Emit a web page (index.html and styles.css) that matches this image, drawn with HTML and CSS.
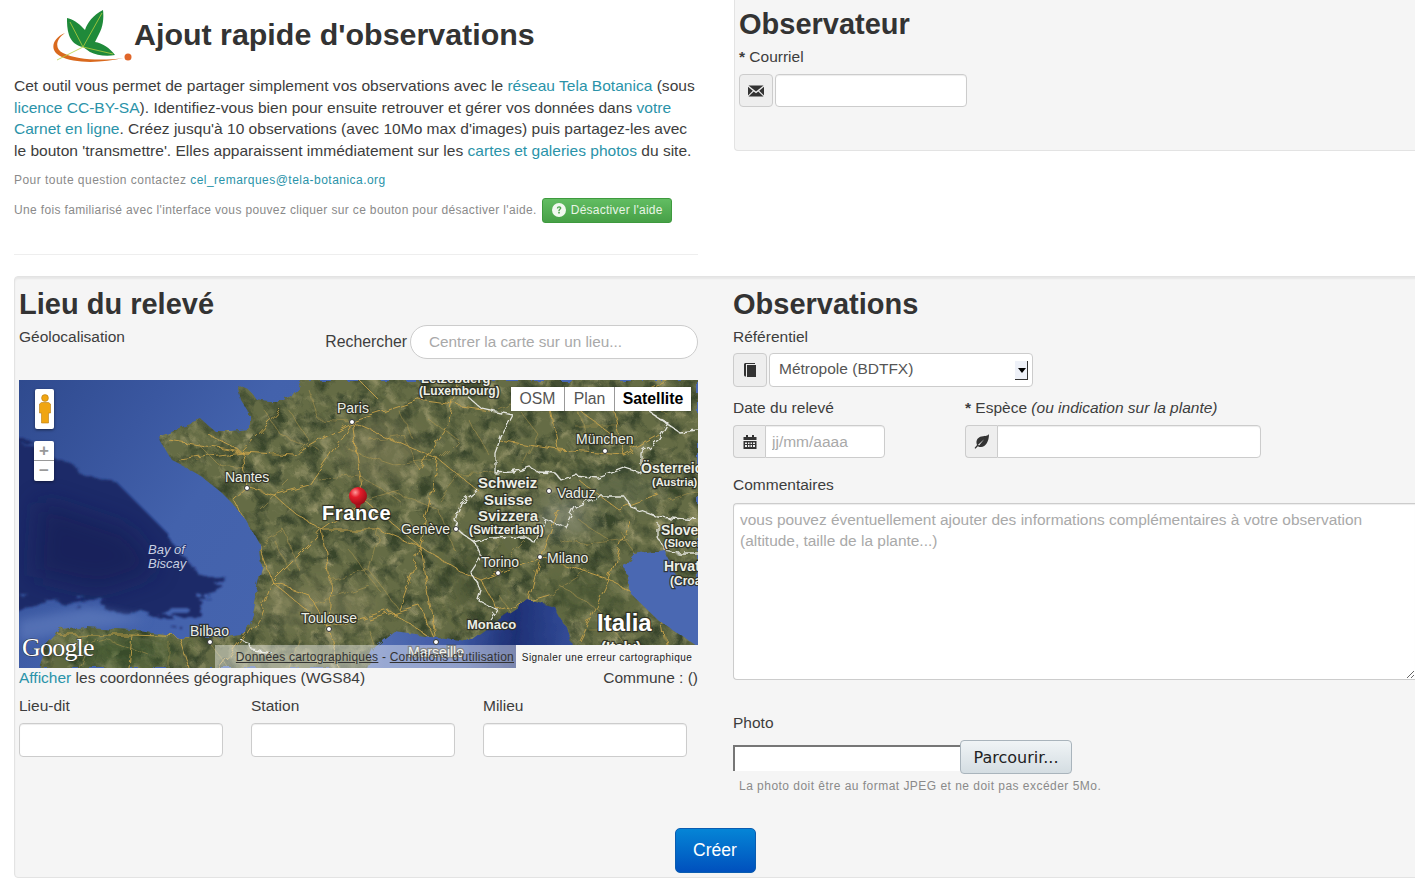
FILE: index.html
```html
<!DOCTYPE html>
<html lang="fr">
<head>
<meta charset="utf-8">
<title>Ajout rapide d'observations</title>
<link rel="stylesheet" href="styles.css">
</head>
<body>
<div class="page">
  <div class="top-row">
    <section class="intro">
      <header class="intro-head">
        <svg class="logo" viewBox="0 0 82 54" width="82" height="54" aria-hidden="true">
          <path d="M13 23C-1 29 -2 41 8 46C22 54 50 53 72 48C50 51 24 50 11 43C3 39 3 30 13 23Z" fill="#d9691e"/>
          <circle cx="76" cy="47" r="3.500" fill="#e0662a"/>
          <path d="M31 37C24 36 19 31 17 25C15 19 15 13 15 8C20 9 27 13 31 18L33 20C35 13 41 5 51 0C52 8 51 17 47 24L43 32C50 33 58 38 63 45C54 47 44 45 38 42Z" fill="#1f8a3a"/>
          <path d="M5 50L31 37L50 3M31 37L18 12M31 37L61 44" fill="none" stroke="#b6cf3e" stroke-width="0.800"/>
        </svg>
        <h1>Ajout rapide d'observations</h1>
      </header>
      <p class="lead">Cet outil vous permet de partager simplement vos observations avec le <a href="#">réseau Tela Botanica</a> (sous <a href="#">licence CC-BY-SA</a>). Identifiez-vous bien pour ensuite retrouver et gérer vos données dans <a href="#">votre Carnet en ligne</a>. Créez jusqu'à 10 observations (avec 10Mo max d'images) puis partagez-les avec le bouton 'transmettre'. Elles apparaissent immédiatement sur les <a href="#">cartes et galeries photos</a> du site.</p>
      <p class="note note-contact">Pour toute question contactez <a href="#">cel_remarques@tela-botanica.org</a></p>
      <p class="note note-help">Une fois familiarisé avec l'interface vous pouvez cliquer sur ce bouton pour désactiver l'aide.
        <button class="btn-help" type="button">
          <svg viewBox="0 0 14 14" width="14" height="14" aria-hidden="true"><circle cx="7" cy="7" r="7" fill="#f2f8f0"/><path d="M4.800 5.400C4.900 3.900 5.900 3.200 7.100 3.200C8.500 3.200 9.400 4 9.400 5.100C9.400 6.500 7.700 6.600 7.700 8.100H6.300C6.300 6.100 7.800 6 7.800 5.200C7.800 4.800 7.500 4.500 7 4.500C6.500 4.500 6.200 4.900 6.200 5.400ZM6.200 8.800H7.800V10.400H6.200Z" fill="#4ea64e"/></svg>
          Désactiver l'aide
        </button>
      </p>
      <hr class="rule">
    </section>
    <section class="observer">
      <h2>Observateur</h2>
      <label class="field-label"><b class="req">*</b> Courriel</label>
      <div class="input-group email-group">
        <span class="addon addon-wide">
          <svg viewBox="0 0 16 12" width="16" height="12" aria-hidden="true"><path d="M0.500 0.500H15.500L8 6.500ZM0 1.800L4.800 5.800L0 10.400ZM16 1.800V10.400L11.200 5.800ZM5.700 6.500L8 8.300L10.300 6.500L15.500 11.500H0.500Z" fill="#333"/></svg>
        </span>
        <input class="text-input" type="text">
      </div>
    </section>
  </div>

  <main class="panel">
    <section class="col-place">
      <h2>Lieu du relevé</h2>
      <div class="geo-row">
        <span class="field-label">Géolocalisation</span>
        <div class="search">
          <label class="search-label">Rechercher</label>
          <input class="search-input" type="text" placeholder="Centrer la carte sur un lieu...">
        </div>
      </div>
      <div class="map">
        <svg class="map-art" viewBox="0 0 679 288" width="679" height="288" aria-hidden="true">
          <defs>
            <linearGradient id="sea" x1="0" y1="0" x2="1" y2="0.300">
              <stop offset="0" stop-color="#2f4a8e"/><stop offset="0.200" stop-color="#3a57a0"/><stop offset="0.350" stop-color="#4362ac"/><stop offset="1" stop-color="#4a68b2"/>
            </linearGradient>
            <linearGradient id="med" x1="0" y1="0" x2="1" y2="0">
              <stop offset="0" stop-color="#5671b6"/><stop offset="0.450" stop-color="#3d58a3"/><stop offset="0.700" stop-color="#1d2f74"/><stop offset="1" stop-color="#36509c"/>
            </linearGradient>
            <filter id="blur5" x="-50%" y="-50%" width="200%" height="200%"><feGaussianBlur stdDeviation="5"/></filter>
            <filter id="blur12" x="-80%" y="-80%" width="260%" height="260%"><feGaussianBlur stdDeviation="12"/></filter>
            <filter id="rough" x="-15%" y="-15%" width="130%" height="130%">
              <feTurbulence type="fractalNoise" baseFrequency="0.035 0.090" numOctaves="4" seed="4" result="n"/>
              <feDisplacementMap in="SourceGraphic" in2="n" scale="42"/>
              <feGaussianBlur stdDeviation="1.300"/>
            </filter>
            <filter id="terrain" x="0" y="0" width="100%" height="100%" color-interpolation-filters="sRGB">
              <feTurbulence type="fractalNoise" baseFrequency="0.060" numOctaves="5" seed="9" result="noise"/>
              <feColorMatrix in="noise" type="matrix" values="0 0 0 0 0.220 0 0 0 0 0.270 0 0 0 0 0.170 3 0 0 0 -1.300" result="dark"/>
              <feColorMatrix in="noise" type="matrix" values="0 0 0 0 0.600 0 0 0 0 0.590 0 0 0 0 0.420 0 3 0 0 -1.450" result="pale"/>
              <feMerge><feMergeNode in="SourceGraphic"/><feMergeNode in="pale"/><feMergeNode in="dark"/></feMerge>
            </filter>
            <filter id="wiggle" x="-3%" y="-3%" width="106%" height="106%">
              <feTurbulence type="fractalNoise" baseFrequency="0.070" numOctaves="3" seed="12" result="n"/>
              <feDisplacementMap in="SourceGraphic" in2="n" scale="9"/>
            </filter>
            <filter id="jag" x="-3%" y="-3%" width="106%" height="106%">
              <feTurbulence type="fractalNoise" baseFrequency="0.140" numOctaves="2" seed="3" result="n"/>
              <feDisplacementMap in="SourceGraphic" in2="n" scale="7"/>
            </filter>
            <clipPath id="landclip"><path d="M283 0L273 13L267 22L250 22L238 20L230 10L218 5L222 20L230 33L230 50L213 52L197 52L183 40L160 48L140 55L143 63L153 80L173 90L187 100L203 113L213 123L227 140L240 163L243 187L238 207L233 233L227 253L200 257L160 257L113 250L67 247L43 250L27 267L20 288L679 288L679 267L639 240L611 213L606 187L616 175L646 170L659 197L679 207L679 0Z"/></clipPath>
            <radialGradient id="pin" cx="0.350" cy="0.300" r="0.800">
              <stop offset="0" stop-color="#ff9a9a"/><stop offset="0.350" stop-color="#e51d2a"/><stop offset="1" stop-color="#8e0b14"/>
            </radialGradient>
          </defs>
          <rect width="679" height="288" fill="url(#sea)"/>
          <path d="M-20 55L40 75L60 90L100 105L130 135L150 155L175 190L210 200L180 215L180 235L130 235L80 225L25 220L-20 235Z" fill="#1a2a68" filter="url(#rough)"/>
          <path d="M20 120L110 150L140 190L80 210L15 195Z" fill="#121d52" opacity="0.600" filter="url(#blur12)"/>
          <path d="M0 240L70 228L130 240L60 250L0 262Z" fill="#5d79bb" opacity="0.700" filter="url(#blur5)"/>
          <g filter="url(#wiggle)">
            <g clip-path="url(#landclip)">
              <rect width="679" height="288" fill="#656c45" filter="url(#terrain)"/>
              <ellipse cx="300" cy="225" rx="60" ry="22" fill="#8d8a62" opacity="0.550" filter="url(#blur12)"/>
              <ellipse cx="360" cy="70" rx="40" ry="34" fill="#807d5a" opacity="0.450" filter="url(#blur12)"/>
              <ellipse cx="545" cy="135" rx="26" ry="16" fill="#a5a79c" opacity="0.600" filter="url(#blur12)"/>
              <ellipse cx="600" cy="110" rx="45" ry="12" fill="#5d6a50" opacity="0.600" filter="url(#blur12)"/>
              <ellipse cx="455" cy="200" rx="18" ry="36" fill="#3c4a2c" opacity="0.600" filter="url(#blur12)"/>
              <ellipse cx="100" cy="272" rx="60" ry="13" fill="#39552c" opacity="0.700" filter="url(#blur12)"/>
              <ellipse cx="570" cy="215" rx="45" ry="20" fill="#4d5a36" opacity="0.600" filter="url(#blur12)"/>
              <path d="M223 72L150 60M223 72L160 80M223 72L190 55M223 72L262 30M223 72L228 108M223 72L275 75L333 42M228 108L255 115L290 105L333 42M228 108L215 120L240 165L253 202M255 115L278 135L303 150L345 120M253 202L240 240L230 255M253 202L310 248L370 230L417 262M253 202L290 165L303 150L312 200L310 248M303 150L360 150L402 167L380 230M402 167L417 262M402 167L345 120L333 42M402 167L440 190L462 200L521 177L590 200L640 225M333 42L400 20L470 30M333 42L420 80L459 110M420 80L400 167M480 60L540 70L605 75L640 55M540 70L530 20M605 75L590 10M521 177L510 220M521 177L540 130M462 200L479 230L530 215M590 200L560 260M590 200L610 140M40 255L113 255L170 257M113 255L110 288M160 257L170 288M227 253L200 288M310 248L320 288M417 262L400 225L350 240M310 248L290 215L253 202M640 225L650 288M560 100L600 130L640 115M600 60L560 30L610 20L650 0M440 0L430 45L400 90M360 20L340 0" fill="none" stroke="#d4a94c" stroke-width="0.900" opacity="0.900"/>
              <path d="M270 30L290 60L275 75M290 10L300 40L333 42M350 60L385 55L400 90M300 100L340 95L380 120M345 120L380 110M360 150L350 190L380 230M310 200L350 190M265 150L280 190M240 165L265 150M420 120L440 95L476 93M410 40L440 60L420 80M500 30L520 55L505 85M560 30L570 70M620 20L650 35M480 215L500 245M540 205L580 230L610 270M530 215L570 190M600 150L620 180M560 140L590 160M60 268L90 260L130 275M150 262L150 288M570 250L600 250M330 70L375 85L420 80M245 30L262 55L300 70M180 65L200 85L228 90M240 130L270 100M330 170L360 210M270 190L255 160M290 225L350 205M370 110L420 130L435 170M380 30L395 60M450 40L470 75M500 100L470 105M540 160L570 165L610 160M490 175L520 145M620 200L650 190M640 100L670 85M650 120L679 110M555 45L600 45M70 262L60 288M190 262L210 288M280 260L270 288M350 250L355 265M480 30L510 15" fill="none" stroke="#bfa052" stroke-width="0.600" opacity="0.750"/>
            </g>
            <path d="M356 267L376 252L412 257L449 262L479 240L509 220L536 227L552 257L560 292L345 292Z" fill="url(#med)"/>
          </g>
          <path d="M449 17L462 28L494 35L482 57L476 73L476 93L493 92L502 90L511 87L520 92L536 93L542 100L556 95L579 98L606 88L622 93L622 73L639 60L649 43L632 33L660 52L679 50M459 110L442 123L436 140L439 150L456 163L472 158L506 157L516 163L526 140L546 147L556 127L579 117L606 117L612 127L639 137L679 140M456 163L462 177L452 192L462 210L459 220L479 230L472 240M639 143L639 157L646 170L659 173L679 173M222 260L230 263L233 270L253 273" fill="none" stroke="#e2e3dc" stroke-width="1.300" filter="url(#jag)"/>
          <path d="M336 123L339 136L342 123Z" fill="#a8141c"/>
          <circle cx="339" cy="116" r="9" fill="url(#pin)"/>
          <g class="dots">
            <circle cx="333" cy="42" r="2.500"/><circle cx="228" cy="108" r="2.500"/><circle cx="586" cy="71" r="2.500"/><circle cx="437" cy="149" r="2.500"/><circle cx="530" cy="111" r="2.500"/><circle cx="521" cy="177" r="2.500"/><circle cx="479" cy="193" r="2.500"/><circle cx="417" cy="262" r="2.500"/><circle cx="310" cy="249" r="2.500"/><circle cx="191" cy="262" r="2.500"/>
          </g>
          <g class="lbl">
            <text x="402" y="3" class="b13">Lëtzebuerg</text>
            <text x="400" y="15" class="b12">(Luxembourg)</text>
            <text x="318" y="33">Paris</text>
            <text x="557" y="64">München</text>
            <text x="622" y="93" class="b14">Österreich</text>
            <text x="633" y="106" class="b11">(Austria)</text>
            <text x="206" y="102">Nantes</text>
            <text x="382" y="154">Genève</text>
            <text x="459" y="108" class="b15">Schweiz</text>
            <text x="465" y="125" class="b15">Suisse</text>
            <text x="459" y="141" class="b15">Svizzera</text>
            <text x="450" y="154" class="b12">(Switzerland)</text>
            <text x="538" y="118">Vaduz</text>
            <text x="528" y="183">Milano</text>
            <text x="462" y="187">Torino</text>
            <text x="642" y="155" class="b14">Slovenija</text>
            <text x="645" y="167" class="b11">(Slovenia)</text>
            <text x="645" y="191" class="b14">Hrvatska</text>
            <text x="651" y="205" class="b12">(Croatia)</text>
            <text x="448" y="249" class="b13">Monaco</text>
            <text x="578" y="251" class="b22">Italia</text>
            <text x="582" y="272" class="b15">(Italy)</text>
            <text x="389" y="277">Marseille</text>
            <text x="282" y="243">Toulouse</text>
            <text x="171" y="256">Bilbao</text>
            <text x="129" y="174" class="ital">Bay of</text>
            <text x="129" y="188" class="ital">Biscay</text>
            <text x="303" y="140" class="b20">France</text>
            <text x="3" y="276" class="google">Google</text>
          </g>
        </svg>
        <div class="pegman">
          <svg viewBox="0 0 12 30" width="12" height="30" aria-hidden="true"><circle cx="6" cy="4" r="3.400" fill="#f0a512" stroke="#b87a10" stroke-width="0.600"/><path d="M2.500 8.500H9.500L11.500 10V19H9.500V29H2.500V19H0.500V10Z" fill="#f0a512" stroke="#b87a10" stroke-width="0.600"/></svg>
        </div>
        <div class="zoom-ctl"><span class="zoom-btn zoom-plus">+</span><span class="zoom-btn">−</span></div>
        <div class="map-types"><span class="map-type type-osm">OSM</span><span class="map-type type-plan">Plan</span><span class="map-type map-type-on">Satellite</span></div>
        <div class="attribution"><a href="#">Données cartographiques</a> - <a href="#">Conditions d'utilisation</a></div>
        <div class="map-report">Signaler une erreur cartographique</div>
      </div>
      <div class="coords-row">
        <span><a href="#">Afficher</a> les coordonnées géographiques (WGS84)</span>
        <span>Commune : ()</span>
      </div>
      <div class="place-fields">
        <div class="place-field"><label class="field-label">Lieu-dit</label><input class="text-input" type="text"></div>
        <div class="place-field"><label class="field-label">Station</label><input class="text-input" type="text"></div>
        <div class="place-field"><label class="field-label">Milieu</label><input class="text-input" type="text"></div>
      </div>
    </section>

    <section class="col-obs">
      <h2>Observations</h2>
      <label class="field-label">Référentiel</label>
      <div class="input-group ref-group">
        <span class="addon addon-wide">
          <svg viewBox="0 0 12 14" width="12" height="14" aria-hidden="true"><path d="M0 1.500C0 0.700 0.700 0 1.500 0H11V1H2V13.500H1.500C0.700 13.500 0 12.800 0 12ZM3 2H12V14H3Z" fill="#333"/></svg>
        </span>
        <div class="select-box">
          <select class="select"><option>Métropole (BDTFX)</option></select>
          <span class="select-arrow"></span>
        </div>
      </div>
      <div class="obs-pair">
        <div class="date-field">
          <label class="field-label">Date du relevé</label>
          <div class="input-group joined date-group">
            <span class="addon">
              <svg viewBox="0 0 14 14" width="14" height="14" aria-hidden="true"><path d="M3 0H5V2H9V0H11V2H13.500V5H0.500V2H3ZM0.500 6H13.500V14H0.500ZM2 7.500V9H4V7.500ZM5 7.500V9H6.500V7.500ZM7.500 7.500V9H9V7.500ZM10 7.500V9H12V7.500ZM2 10V12H4V10ZM5 10V12H6.500V10ZM7.500 10V12H9V10ZM10 10V12H12V10Z" fill="#333"/></svg>
            </span>
            <input class="text-input" type="text" placeholder="jj/mm/aaaa">
          </div>
        </div>
        <div class="species-field">
          <label class="field-label"><b class="req">*</b> Espèce <em>(ou indication sur la plante)</em></label>
          <div class="input-group joined species-group">
            <span class="addon">
              <svg viewBox="0 0 14 14" width="15" height="15" aria-hidden="true"><path d="M14 0C13 1.500 12 1.800 8.500 2C4.500 2.300 2.200 4.500 2.300 8C2.300 8.800 2.500 9.500 2.800 10.200L0.500 13L1.300 13.800L3.600 11.400C4.500 12 5.500 12.200 6.500 12.200C11 12 14 7 14 0ZM3.800 10L9.500 5L4.700 10.800Z" fill="#333"/></svg>
            </span>
            <input class="text-input" type="text">
          </div>
        </div>
      </div>
      <label class="field-label comment-label">Commentaires</label>
      <textarea class="comment" placeholder="vous pouvez éventuellement ajouter des informations complémentaires à votre observation (altitude, taille de la plante...)"></textarea>
      <label class="field-label photo-label">Photo</label>
      <div class="file-row">
        <span class="file-name"></span>
        <button class="file-btn" type="button">Parcourir...</button>
      </div>
      <p class="note file-note">La photo doit être au format JPEG et ne doit pas excéder 5Mo.</p>
    </section>
    <div class="submit-row"><button class="btn-create" type="button">Créer</button></div>
  </main>
</div>
</body>
</html>
```
FILE: styles.css
```css
* { box-sizing: border-box; }
html, body { margin: 0; padding: 0; height: 879px; overflow: hidden; background: #fff; }
body { font-family: "Liberation Sans", Arial, sans-serif; font-size: 15.5px; line-height: 20px; color: #3d3d3d; }
a { color: #2a93a9; text-decoration: none; }
.page { padding-left: 14px; width: 1415px; }

.top-row { display: flex; height: 276px; }
.intro { width: 684px; flex: none; }
.intro-head { display: flex; align-items: flex-start; padding: 10px 0 0 38px; height: 75px; }
.logo { flex: none; }
.intro-head h1 { margin: 6px 0 0 0; font-size: 30.4px; line-height: 36px; font-weight: bold; color: #333; }
.lead { margin: 0; font-size: 15.55px; line-height: 21.7px; }
.note { font-size: 12px; line-height: 16px; color: #8a8a8a; letter-spacing: 0.47px; margin: 0; }
.note-contact { margin-top: 10px; }
.note-help { margin-top: 10px; display: flex; align-items: center; white-space: nowrap; gap: 5px; letter-spacing: 0.35px; }
.btn-help { display: inline-flex; align-items: center; gap: 5px; width: 130px; height: 25px; padding: 0 0 0 9px; border: 1px solid #3e9a3e; border-radius: 3px; background: linear-gradient(#62bd62, #47a047); color: #e9f5e6; font: 12px "Liberation Sans", Arial, sans-serif; letter-spacing: 0.25px; white-space: nowrap; }
.rule { margin: 31px 0 0; border: 0; border-top: 1px solid #eee; }

.observer { flex: 1; margin: 0 0 125px 36px; background: #f5f5f5; border-left: 1px solid #e3e3e3; border-bottom: 1px solid #e3e3e3; border-bottom-left-radius: 4px; padding: 7px 0 0 4px; }
h2 { margin: 0; font-size: 29px; line-height: 34px; font-weight: bold; color: #333; }
.field-label { display: block; font-size: 15.5px; line-height: 20px; }
.req { font-weight: bold; }
.observer .field-label { margin-top: 6px; }

.input-group { display: flex; }
.addon { display: flex; align-items: center; justify-content: center; flex: none; width: 32px; background: #eee; border: 1px solid #ccc; border-radius: 4px 0 0 4px; }
.addon-wide { width: 34px; border-radius: 4px; margin-right: 2px; }
.text-input { display: block; height: 33px; padding: 4px 6px; background: #fff; border: 1px solid #ccc; border-radius: 4px; box-shadow: inset 0 1px 1px rgba(0,0,0,.075); font: 15.5px "Liberation Sans", Arial, sans-serif; color: #555; min-width: 0; }
.text-input::placeholder, .search-input::placeholder, .comment::placeholder { color: #a9a9a9; opacity: 1; }
.email-group { margin-top: 7px; height: 33px; }
.email-group .text-input { width: 192px; }
.joined .addon { border-right: 0; }
.joined .text-input { border-radius: 0 4px 4px 0; flex: 1; }

.panel { position: relative; width: 1406px; height: 602px; background: #f5f5f5; border: 1px solid #e3e3e3; border-radius: 4px; box-shadow: inset 0 2px 2px rgba(0,0,0,.06); padding: 10px 0 0 4px; display: grid; grid-template-columns: 679px 682px; column-gap: 35px; align-content: start; }
.geo-row { display: flex; justify-content: space-between; align-items: flex-start; height: 49px; position: relative; }
.geo-row > .field-label { margin-top: 6px; }
.search { display: flex; align-items: center; gap: 3px; margin-top: 4px; }
.search-label { font-size: 15.8px; }
.search-input { width: 288px; height: 34px; border: 1px solid #ccc; border-radius: 17px; padding: 0 18px; background: #fff; font: 15.3px "Liberation Sans", Arial, sans-serif; }

.map { position: relative; width: 679px; height: 288px; overflow: hidden; margin-top: 10px; background: #3e5ba6; }
.map-art { display: block; }
.dots circle { fill: #fff; stroke: #333; stroke-width: 1; }
.lbl text { font: 14px "Liberation Sans", Arial, sans-serif; fill: #eceee6; stroke: #2a2c22; stroke-width: 2.400px; stroke-opacity: .85; paint-order: stroke; }
.lbl .b11 { font-size: 11px; font-weight: bold; }
.lbl .b12 { font-size: 12px; font-weight: bold; }
.lbl .b13 { font-size: 13px; font-weight: bold; }
.lbl .b14 { font-size: 14px; font-weight: bold; }
.lbl .b15 { font-size: 15px; font-weight: bold; }
.lbl .b20 { font-size: 20px; font-weight: bold; fill: #fff; letter-spacing: 0.6px; }
.lbl .b22 { font-size: 24px; font-weight: bold; fill: #fff; }
.lbl .ital { font-size: 13px; font-style: italic; fill: #c8cfe4; stroke: #1c2a60; stroke-width: 1.500px; }
.lbl .google { font: 26px "Liberation Serif", serif; fill: #fff; stroke: #333; stroke-width: 1.200px; letter-spacing: -0.8px; }
.pegman { position: absolute; left: 16px; top: 9px; width: 19px; height: 40px; background: #fff; border-radius: 2px; box-shadow: 0 1px 3px rgba(0,0,0,.5); display: flex; align-items: center; justify-content: center; }
.zoom-ctl { position: absolute; left: 15px; top: 61px; width: 20px; height: 40px; background: #fff; border-radius: 2px; box-shadow: 0 1px 3px rgba(0,0,0,.4); display: flex; flex-direction: column; }
.zoom-btn { height: 20px; text-align: center; font: bold 17px/19px "Liberation Sans", Arial, sans-serif; color: #999; }
.zoom-plus { border-bottom: 1px solid #999; }
.map-types { position: absolute; top: 7px; left: 492px; height: 24px; display: flex; background: #fff; box-shadow: 0 0 1px rgba(0,0,0,.4); }
.map-type { display: flex; align-items: center; justify-content: center; height: 24px; font-size: 15.8px; color: #555; border-right: 1px solid #999; }
.type-osm { width: 54px; }
.type-plan { width: 50px; }
.map-type-on { width: 76px; font-weight: bold; color: #000; border-right: 0; }
.attribution { position: absolute; left: 196px; right: 182px; bottom: 0; height: 23px; padding-right: 2px; background: rgba(255,255,255,.42); font-size: 12px; line-height: 24px; color: #333; text-align: right; letter-spacing: 0.22px; white-space: nowrap; }
.attribution a { color: #333; text-decoration: underline; }
.map-report { position: absolute; right: 0; bottom: 0; width: 182px; height: 23px; background: #f5f5f5; font-size: 10px; line-height: 25px; text-align: center; color: #222; letter-spacing: 0.45px; white-space: nowrap; }

.coords-row { display: flex; justify-content: space-between; height: 20px; }
.place-fields { display: flex; gap: 28px; margin-top: 8px; }
.place-field { width: 204px; }
.place-field .text-input { width: 204px; height: 34px; margin-top: 7px; }

.col-obs .field-label { white-space: nowrap; }
.col-obs > .field-label:first-of-type { margin-top: 6px; }
.ref-group { margin-top: 6px; height: 34px; }
.select-box { position: relative; width: 264px; }
.select { appearance: none; width: 100%; height: 34px; border: 1px solid #ccc; border-radius: 4px; background: #fff; padding: 0 0 3px 9px; font: 15.5px "Liberation Sans", Arial, sans-serif; color: #555; }
.select-arrow { position: absolute; right: 5px; top: 8px; width: 13px; height: 19px; background: #eef1f8; border-right: 1px solid #333; border-bottom: 1px solid #333; }
.select-arrow::after { content: ""; position: absolute; left: 3px; top: 7px; border: 4px solid transparent; border-top: 5px solid #000; border-bottom: 0; }
.obs-pair { display: flex; gap: 80px; margin-top: 11px; }
.date-field { width: 152px; }
.species-field { width: 296px; }
.obs-pair .input-group { margin-top: 7px; height: 33px; }
.comment-label { margin-top: 17px; }
.comment { display: block; margin-top: 8px; width: 682px; height: 177px; padding: 5px 6px; background: #fff; border: 1px solid #ccc; border-right: 0; border-radius: 4px 0 0 4px; font: 15.45px/21px "Liberation Sans", Arial, sans-serif; color: #555; box-shadow: inset 0 1px 1px rgba(0,0,0,.075); resize: both; }
.photo-label { margin-top: 33px; }
.file-row { display: flex; align-items: flex-end; height: 34px; margin-top: 7px; }
.file-name { display: block; width: 227px; height: 26px; margin-bottom: 3px; background: #fff; border-top: 2px solid #767676; border-left: 2px solid #767676; }
.file-btn { width: 112px; height: 34px; border: 1px solid #a9b4bc; border-radius: 4px; background: linear-gradient(#f0f4f6, #d4dde2); font: 16px "DejaVu Sans", sans-serif; color: #222; padding: 0; }
.file-note { margin: 4px 0 0 6px; }
.submit-row { position: absolute; left: 0; right: 4px; bottom: 4px; display: flex; justify-content: center; }
.btn-create { width: 81px; height: 45px; border: 1px solid #0a5cb0; border-radius: 5px; background: linear-gradient(#0585d6, #0050bd); color: #fff; font: 17.5px "Liberation Sans", Arial, sans-serif; }
```
